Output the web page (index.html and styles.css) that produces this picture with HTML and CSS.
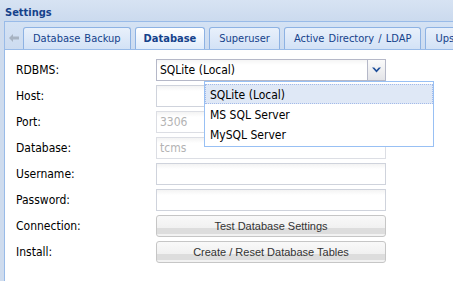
FILE: index.html
```html
<!DOCTYPE html>
<html lang="en">
<head>
    <meta charset="UTF-8">
    <title>Settings</title>
    <link rel="stylesheet" href="styles.css">
</head>
<body>

    <div class="window">
        <div class="window-header">Settings</div>

        <div class="tabs">
            <!-- Tab strip -->
            <div class="tab-strip">
                <div class="tab-scroll-left">
                    <svg width="10" height="8" viewBox="0 0 10 8">
                        <path d="M0 4 L4 0 L4 2.5 L10 2.5 L10 5.5 L4 5.5 L4 8 Z" fill="#a7b3c2"/>
                    </svg>
                </div>
                <div class="tab">Database Backup</div>
                <div class="tab active">Database</div>
                <div class="tab">Superuser</div>
                <div class="tab">Active Directory / LDAP</div>
                <div class="tab">Upstream</div>
            </div>

            <!-- Database settings form -->
            <div class="tab-body">
                <div class="form">
                    <div class="form-label">RDBMS:</div>
                    <div class="combo">
                        <span class="combo-value">SQLite (Local)</span>
                        <span class="combo-trigger">
                            <svg width="9" height="6" viewBox="0 0 9 6">
                                <path d="M0 0.5 L4.5 5.5 L9 0.5 L6.8 0.5 L4.5 3 L2.2 0.5 Z" fill="#1f4f9a"/>
                            </svg>
                        </span>
                    </div>

                    <div class="form-label">Host:</div>
                    <div class="field"></div>

                    <div class="form-label">Port:</div>
                    <div class="field disabled">3306</div>

                    <div class="form-label">Database:</div>
                    <div class="field disabled">tcms</div>

                    <div class="form-label">Username:</div>
                    <div class="field"></div>

                    <div class="form-label">Password:</div>
                    <div class="field"></div>

                    <div class="form-label">Connection:</div>
                    <div class="button">Test Database Settings</div>

                    <div class="form-label">Install:</div>
                    <div class="button">Create / Reset Database Tables</div>
                </div>

                <!-- Open combo list -->
                <div class="combo-list">
                    <div class="combo-item selected">SQLite (Local)</div>
                    <div class="combo-item">MS SQL Server</div>
                    <div class="combo-item">MySQL Server</div>
                </div>
            </div>
        </div>
    </div>

</body>
</html>
```

FILE: styles.css
```css
* {
    box-sizing: border-box;
}

body {
    margin: 0;
    font-family: "DejaVu Sans Condensed", "DejaVu Sans", sans-serif;
    font-size: 12px;
    background-color: #ffffff;
    overflow: hidden;
}

.window {
    width: 453px;
    height: 281px;
    overflow: hidden;
    background-color: #cfdcee;
}

.window-header {
    height: 21px;
    padding: 6px 0 0 5px;
    font-size: 11px;
    font-weight: bold;
    color: #15428b;
    background: linear-gradient(#d7e3f3, #cbdaee);
}

/* Tab panel */
.tabs {
    margin-left: 4px;
    height: 260px;
    border-left: 1px solid #99bbe8;
    border-top: 1px solid #99bbe8;
    display: flex;
    flex-direction: column;
}

.tab-strip {
    display: flex;
    align-items: flex-end;
    gap: 4px;
    height: 28px;
    padding-top: 5px;
    background: linear-gradient(#d4e2f4, #cddcf0);
    border-bottom: 1px solid #99bbe8;
    white-space: nowrap;
    overflow: hidden;
}

.tab-scroll-left {
    width: 18px;
    height: 22px;
    display: flex;
    align-items: center;
    justify-content: center;
    padding-left: 4px;
}

.tab {
    flex-shrink: 0;
    height: 22px;
    padding: 4px 9px 0 9px;
    font-size: 11px;
    word-spacing: 1px;
    color: #15428b;
    border: 1px solid #8db2e3;
    border-bottom: none;
    border-radius: 3px 3px 0 0;
    background: linear-gradient(#e8f0fb, #d3e2f6);
}

.tab.active {
    font-weight: bold;
    height: 23px;
    padding: 4px 8px 0 8px;
    margin-bottom: -1px;
    background: linear-gradient(#ffffff, #deebfb);
}

.tab-body {
    position: relative;
    flex: 1;
    background-color: #ffffff;
    padding: 9px 0 0 11px;
}

/* Form rows */
.form {
    display: grid;
    grid-template-columns: 140px 230px;
    grid-auto-rows: 22px;
    row-gap: 4px;
}

.form-label {
    display: flex;
    align-items: center;
    color: #000000;
}

.field {
    display: flex;
    align-items: center;
    padding-left: 3px;
    border: 1px solid #cfd3dc;
    background: linear-gradient(#f3f3f3, #ffffff 5px);
}

.field.disabled {
    color: #b3b3b3;
    border-color: #dcdee4;
}

.combo {
    display: flex;
    align-items: center;
    border: 1px solid #b5b8c8;
    background: linear-gradient(#f5f5f5, #ffffff 5px);
}

.combo-value {
    flex: 1;
    padding-left: 3px;
}

.combo-trigger {
    width: 18px;
    height: 100%;
    display: flex;
    align-items: center;
    justify-content: center;
    border-left: 1px solid #b5b8c8;
    background: linear-gradient(#fbfbfb, #e3e4e8);
}

.button {
    display: flex;
    align-items: center;
    justify-content: center;
    font-family: "Liberation Sans", Arial, sans-serif;
    font-size: 11px;
    color: #333333;
    border: 1px solid #c6c6c6;
    border-radius: 3px;
    background: linear-gradient(#f9f9f9 0%, #f1f1f1 58%, #dddddd 60%, #dddddd 88%, #f2f2f2 90%);
}

/* Dropdown list over the form */
.combo-list {
    position: absolute;
    left: 199px;
    top: 31px;
    width: 230px;
    height: 66px;
    padding-top: 2px;
    background-color: #ffffff;
    border: 1px solid #98c0f4;
}

.combo-item {
    height: 20px;
    padding: 3px 0 0 4px;
    border: 1px solid transparent;
}

.combo-item.selected {
    background-color: #dfe8f6;
    border: 1px dotted #a3bae9;
}
```
